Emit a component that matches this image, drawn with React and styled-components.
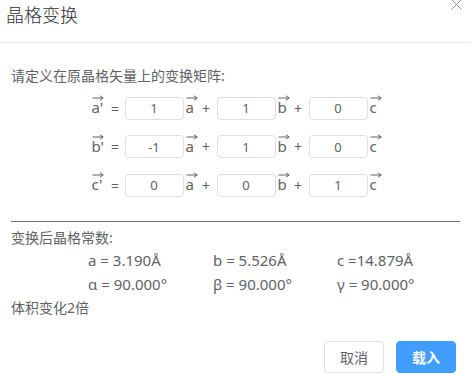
import React from 'react';
import styled, { createGlobalStyle } from 'styled-components';

const GlobalStyle = createGlobalStyle`
	body {
		margin: 0;
		background: #fff;
		font-family: "Noto Sans", "Noto Sans CJK SC", sans-serif;
		color: #606266;
	}
`;

const Dialog = styled.div`
	width: 471px;
	height: 374px;
	background: #fff;
	overflow: hidden;
`;
const Header = styled.div`
	position: relative;
	height: 42px;
	border-bottom: 1px solid #e6e8eb;
	box-sizing: content-box;
	padding-left: 6px;
`;
const Title = styled.h2`
	margin: 0;
	padding-top: 3px;
	font-size: 18px;
	line-height: 24px;
	font-weight: 300;
	color: #303133;
`;
const Close = styled.button`
	position: absolute;
	top: -1px;
	right: 8px;
	width: 12px;
	height: 12px;
	padding: 0;
	border: 0;
	background: none;
	display: flex;
`;
const Body = styled.div`
	padding: 23px 11px 0 11px;
`;
const Text = styled.p`
	margin: ${(p) => p.mt || 0}px 0 0;
	font-size: 14px;
	line-height: 20px;
`;
const Matrix = styled.div`
	margin-top: 10px;
	display: flex;
	flex-direction: column;
	gap: 14.5px;
`;
const Row = styled.div`
	display: flex;
	align-items: center;
	justify-content: center;
	height: 24px;
	font-size: 14px;
`;
const Vec = styled.span`
	display: inline-flex;
	flex-direction: column;
	align-items: flex-start;
	width: ${(p) => p.w || 10}px;
	font-size: 15px;
	line-height: 15px;
	margin-top: -6px;
	svg {
		display: block;
		margin-bottom: -1px;
	}
`;
const Op = styled.span`
	width: ${(p) => p.w}px;
	text-align: center;
	font-size: 14px;
`;
const Cell = styled.input`
	width: 59px;
	height: 23px;
	box-sizing: border-box;
	border: 1px solid #dcdfe6;
	border-radius: 4px;
	text-align: center;
	font-family: inherit;
	font-size: 13px;
	color: #606266;
	margin: 0 2px 0 0;
	padding: 0;
	outline: none;
`;
const Divider = styled.hr`
	margin: 24px 0 0;
	border: 0;
	border-top: 1px solid #6b6b6b;
`;
const Constants = styled.div`
	display: grid;
	grid-template-columns: 125px 124px auto;
	padding-left: 77px;
	font-size: 15px;
	line-height: 24px;
`;
const Footer = styled.div`
	display: flex;
	justify-content: flex-end;
	gap: 12px;
	padding: 23px 15px 0 0;
`;
const Button = styled.button`
	height: 32px;
	width: 60px;
	box-sizing: border-box;
	border-radius: 4px;
	font-family: inherit;
	font-size: 14px;
	border: 1px solid ${(p) => (p.primary ? '#409eff' : '#dcdfe6')};
	background: ${(p) => (p.primary ? '#409eff' : '#fff')};
	color: ${(p) => (p.primary ? '#fff' : '#606266')};
	font-weight: ${(p) => (p.primary ? 700 : 400)};
	padding: 0;
`;

function Arrow() {
	return (
		<svg width="12" height="6" viewBox="0 0 12 6">
			<path d="M0.5 3H11M8 0.8L11.2 3L8 5.2" fill="none" stroke="#606266" strokeWidth="1" />
		</svg>
	);
}

function Vector({ name, prime, w }) {
	return (
		<Vec w={w}>
			<Arrow />
			<span>
				{name}
				{prime ? "'" : ''}
			</span>
		</Vec>
	);
}

const rows = [
	['a', ['1', '1', '0']],
	['b', ['-1', '1', '0']],
	['c', ['0', '0', '1']],
];

export default function App() {
	return (
		<Dialog>
			<GlobalStyle />
			<Header>
				<Title>晶格变换</Title>
				<Close aria-label="close">
					<svg width="11" height="11" viewBox="0 0 11 11">
						<path d="M0.5 0.5L10.5 10.5M10.5 0.5L0.5 10.5" stroke="#909399" strokeWidth="1" />
					</svg>
				</Close>
			</Header>
			<Body>
				<Text>请定义在原晶格矢量上的变换矩阵:</Text>
				<Matrix>
					{rows.map(([n, v]) => (
						<Row key={n}>
							<Vector name={n} prime w={14} />
							<Op w={19}>=</Op>
							<Cell defaultValue={v[0]} />
							<Vector name="a" />
							<Op w={21}>+</Op>
							<Cell defaultValue={v[1]} />
							<Vector name="b" />
							<Op w={21}>+</Op>
							<Cell defaultValue={v[2]} />
							<Vector name="c" />
						</Row>
					))}
				</Matrix>
				<Divider />
				<Text mt={6}>变换后晶格常数:</Text>
				<Constants>
					<span>a = 3.190Å</span>
					<span>b = 5.526Å</span>
					<span>c =14.879Å</span>
					<span>α = 90.000°</span>
					<span>β = 90.000°</span>
					<span>γ = 90.000°</span>
				</Constants>
				<Text mt={2}>体积变化2倍</Text>
			</Body>
			<Footer>
				<Button>取消</Button>
				<Button primary>载入</Button>
			</Footer>
		</Dialog>
	);
}
